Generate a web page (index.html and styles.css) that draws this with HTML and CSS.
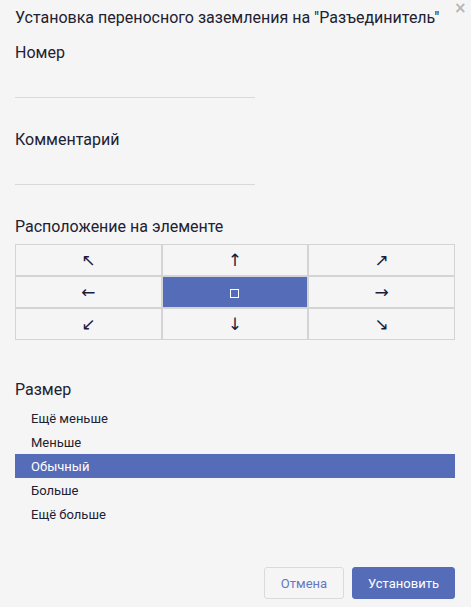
FILE: index.html
```html
<!DOCTYPE html>
<html lang="ru">
<head>
<meta charset="utf-8">
<link rel="stylesheet" href="styles.css">
</head>
<body>
<div class="dialog">
  <button class="close" aria-label="close">×</button>
  <div class="title">Установка переносного заземления на "Разъединитель"</div>

  <div class="label first">Номер</div>
  <div class="input"></div>

  <div class="label">Комментарий</div>
  <div class="input"></div>

  <div class="label">Расположение на элементе</div>
  <div class="grid">
    <div class="cell">↖</div>
    <div class="cell">↑</div>
    <div class="cell">↗</div>
    <div class="cell">←</div>
    <div class="cell active"><span class="box"></span></div>
    <div class="cell">→</div>
    <div class="cell">↙</div>
    <div class="cell">↓</div>
    <div class="cell">↘</div>
  </div>

  <div class="label size-label">Размер</div>
  <ul class="list">
    <li>Ещё меньше</li>
    <li>Меньше</li>
    <li class="selected">Обычный</li>
    <li>Больше</li>
    <li>Ещё больше</li>
  </ul>

  <div class="footer">
    <button class="btn cancel">Отмена</button>
    <button class="btn primary">Установить</button>
  </div>
</div>
</body>
</html>
```
FILE: styles.css
```css
html, body {
  margin: 0;
  padding: 0;
  background: #f5f5f5;
}
body {
  font-family: Roboto, "Noto Sans", sans-serif;
  color: #212131;
  width: 471px;
  height: 607px;
  overflow: hidden;
}
.dialog {
  position: relative;
  padding: 8px 16px 0 15px;
  height: 607px;
  box-sizing: border-box;
}
.close {
  position: absolute;
  top: 1px;
  right: 5px;
  border: none;
  background: none;
  color: #b5b5b5;
  font-size: 15px;
  font-weight: bold;
  font-family: "DejaVu Sans", sans-serif;
  padding: 0;
  width: 12px;
  height: 15px;
  line-height: 15px;
}
.title {
  font-size: 16px;
  line-height: 20px;
}
.label {
  font-size: 16px;
  line-height: 20px;
  margin-top: 32px;
}
.label.first {
  margin-top: 15px;
}
.input {
  width: 240px;
  height: 34px;
  border-bottom: 1px solid #d9d9d9;
}
.grid {
  margin-top: 7px;
  display: grid;
  grid-template-columns: repeat(3, 1fr);
  width: 440px;
}
.cell {
  height: 30px;
  border: 1px solid #d4d4d4;
  display: flex;
  align-items: center;
  justify-content: center;
  font-family: "DejaVu Sans", sans-serif;
  font-size: 17px;
  line-height: 1;
  color: #1c1c3a;
}
.cell.active {
  background: #556cb9;
}
.box {
  width: 7px;
  height: 7px;
  border: 1px solid #fff;
  margin-top: 2px;
}
.size-label {
  margin-top: 40px;
}
.list {
  list-style: none;
  margin: 6px 0 0;
  padding: 0;
  width: 440px;
}
.list li {
  height: 24px;
  line-height: 25px;
  padding-left: 16px;
  font-size: 13px;
}
.list li.selected {
  background: #556cb9;
  color: #fff;
}
.footer {
  display: flex;
  justify-content: flex-end;
  gap: 8px;
  width: 440px;
  margin-top: 41px;
}
.btn {
  height: 32px;
  font-family: Roboto, sans-serif;
  font-size: 13px;
  border-radius: 3px;
  box-sizing: border-box;
}
.cancel {
  width: 80px;
  background: #f5f5f5;
  border: 1px solid #dadada;
  color: #6677c2;
}
.primary {
  width: 103px;
  background: #556cb9;
  border: 1px solid #556cb9;
  color: #fff;
}
```
